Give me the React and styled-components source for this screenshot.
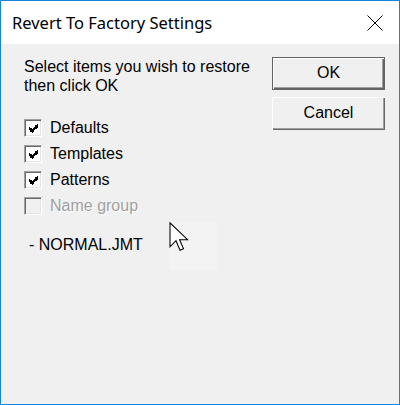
import React from "react";
import styled, { createGlobalStyle } from "styled-components";

const Global = createGlobalStyle`
  html, body { margin: 0; padding: 0; background: #fff; }
  * { box-sizing: border-box; }
`;

const items = [
  { label: "Defaults", checked: true },
  { label: "Templates", checked: true },
  { label: "Patterns", checked: true },
  { label: "Name group", checked: false, disabled: true },
];

const App = () => {
  return (
    <>
      <Global />
      <Window>
        <TitleBar>
          <Title>Revert To Factory Settings</Title>
          <CloseBtn>
            <svg width="16" height="16" viewBox="0 0 16 16">
              <path d="M0.5 0.5 L15.5 15.5 M15.5 0.5 L0.5 15.5" stroke="#000" strokeWidth="1" fill="none" />
            </svg>
          </CloseBtn>
        </TitleBar>
        <Body>
          <LeftCol>
            <Prompt>Select items you wish to restore<br />then click OK</Prompt>
            <CheckList>
              {items.map(it => (
                <CheckRow key={it.label}>
                  <Box disabled={it.disabled}>
                    {it.checked && (
                      <svg width="9" height="9" viewBox="0 0 7 7" shapeRendering="crispEdges">
                        <path d="M0 2h1v1h-1z M0 3h2v1h-2z M0 4h3v1h-3z M1 5h2v1h-2z M2 6h1v1h-1z M6 0h1v1h-1z M5 1h2v1h-2z M4 2h3v1h-3z M3 3h3v1h-3z M2 4h3v1h-3z M3 5h1v1h-1z" fill="#000" />
                      </svg>
                    )}
                  </Box>
                  <CheckLabel disabled={it.disabled}>{it.label}</CheckLabel>
                </CheckRow>
              ))}
            </CheckList>
            <FileName>- NORMAL.JMT</FileName>
          </LeftCol>
          <RightCol>
            <Button primary>OK</Button>
            <Button>Cancel</Button>
          </RightCol>
          <Cursor>
            <svg width="20" height="30" viewBox="0 0 13 20">
              <path d="M0.5 0.5 L0.5 16.5 L4.5 12.5 L7.2 18.8 L9.5 17.8 L6.9 11.8 L12.2 11.8 Z" fill="#fff" stroke="#000" strokeWidth="0.7" strokeLinejoin="miter" />
            </svg>
          </Cursor>
        </Body>
      </Window>
    </>
  );
};

export default App;

const Window = styled.div`
  width: 400px;
  height: 405px;
  border: 1px solid #1883d7;
  display: flex;
  flex-direction: column;
  background: #f0f0f0;
`;

const TitleBar = styled.div`
  height: 43px;
  flex: none;
  background: #fff;
  display: flex;
  align-items: center;
  justify-content: space-between;
  padding: 0 16px 0 11px;
`;

const Title = styled.div`
  font-family: "Noto Sans", "Open Sans", sans-serif;
  font-size: 16.5px;
  color: #000;
`;

const CloseBtn = styled.div`
  display: flex;
  align-items: center;
`;

const Body = styled.div`
  flex: 1;
  position: relative;
  display: flex;
  justify-content: space-between;
  padding: 13px 14px 0 23px;
  font-family: "Liberation Sans", Arial, sans-serif;
  font-size: 16px;
  color: #000;
`;

const LeftCol = styled.div`
  display: flex;
  flex-direction: column;
`;

const Prompt = styled.div`
  line-height: 19px;
`;

const CheckList = styled.div`
  display: flex;
  flex-direction: column;
  gap: 8px;
  margin-top: 24px;
`;

const CheckRow = styled.div`
  display: flex;
  align-items: center;
  gap: 8px;
  height: 18px;
`;

const Box = styled.div`
  width: 18px;
  height: 18px;
  display: flex;
  align-items: center;
  justify-content: center;
  background: ${p => (p.disabled ? "#f0f0f0" : "#fff")};
  border-top: 1px solid #a0a0a0;
  border-left: 1px solid #a0a0a0;
  border-right: 1px solid #fff;
  border-bottom: 1px solid #fff;
  box-shadow: inset 1px 1px 0 #696969, inset -1px -1px 0 #e3e3e3;
`;

const CheckLabel = styled.span`
  color: ${p => (p.disabled ? "#a0a0a0" : "#000")};
  text-shadow: ${p => (p.disabled ? "1px 1px 0 #fff" : "none")};
`;

const FileName = styled.div`
  margin-top: 21px;
  padding-left: 5px;
`;

const RightCol = styled.div`
  display: flex;
  flex-direction: column;
  gap: 7px;
`;

const Button = styled.div`
  width: 113px;
  height: 33px;
  display: flex;
  align-items: center;
  justify-content: center;
  background: #f0f0f0;
  border: ${p => (p.primary ? "1px solid #646464" : "none")};
  box-shadow: ${p =>
    p.primary
      ? "inset 1px 1px 0 #fff, inset -1px -1px 0 #646464, inset -2px -2px 0 #a0a0a0"
      : "inset 1px 1px 0 #fff, inset -1px -1px 0 #696969, inset -2px -2px 0 #a0a0a0"};
  padding-bottom: 1px;
`;

const Cursor = styled.div`
  position: absolute;
  left: 168px;
  top: 178px;
  width: 48px;
  height: 48px;
  background: #f3f3f3;
  pointer-events: none;
`;
